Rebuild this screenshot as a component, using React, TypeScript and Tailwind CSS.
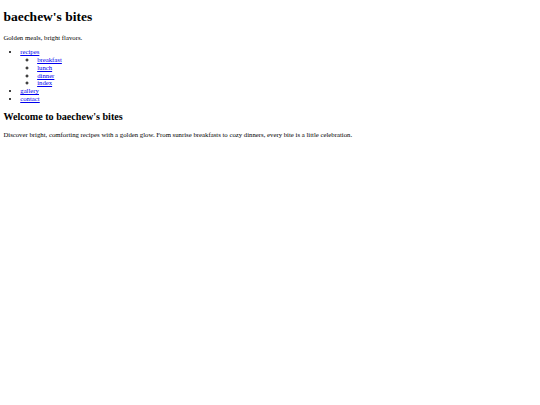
export default function App() {
  const link = "text-[#0000ee] underline";
  return (
    <div className="min-h-[405px] bg-white px-[3.375px] py-[0.1px] text-black font-['Liberation_Serif','Times_New_Roman',serif]">
      <h1 className="my-[9.045px] text-[13.5px] font-bold leading-[15.53px]">baechew's bites</h1>
      <p className="my-[6.75px] text-[6.75px] leading-[7.76px]">Golden meals, bright flavors.</p>
      <nav>
        <ul className="my-[6.75px] list-disc pl-[16.875px] text-[6.75px] leading-[7.76px]">
          <li>
            <a href="#" className={link}>recipes</a>
            <ul className="list-[circle] pl-[16.875px]">
              <li><a href="#" className={link}>breakfast</a></li>
              <li><a href="#" className={link}>lunch</a></li>
              <li><a href="#" className={link}>dinner</a></li>
              <li><a href="#" className={link}>index</a></li>
            </ul>
          </li>
          <li><a href="#" className={link}>gallery</a></li>
          <li><a href="#" className={link}>contact</a></li>
        </ul>
      </nav>
      <h2 className="my-[8.4px] text-[10.125px] font-bold leading-[11.64px]">Welcome to baechew's bites</h2>
      <p className="my-[6.75px] text-[6.75px] leading-[7.76px]">
        Discover bright, comforting recipes with a golden glow. From sunrise breakfasts to cozy dinners, every bite is a little celebration.
      </p>
    </div>
  );
}
